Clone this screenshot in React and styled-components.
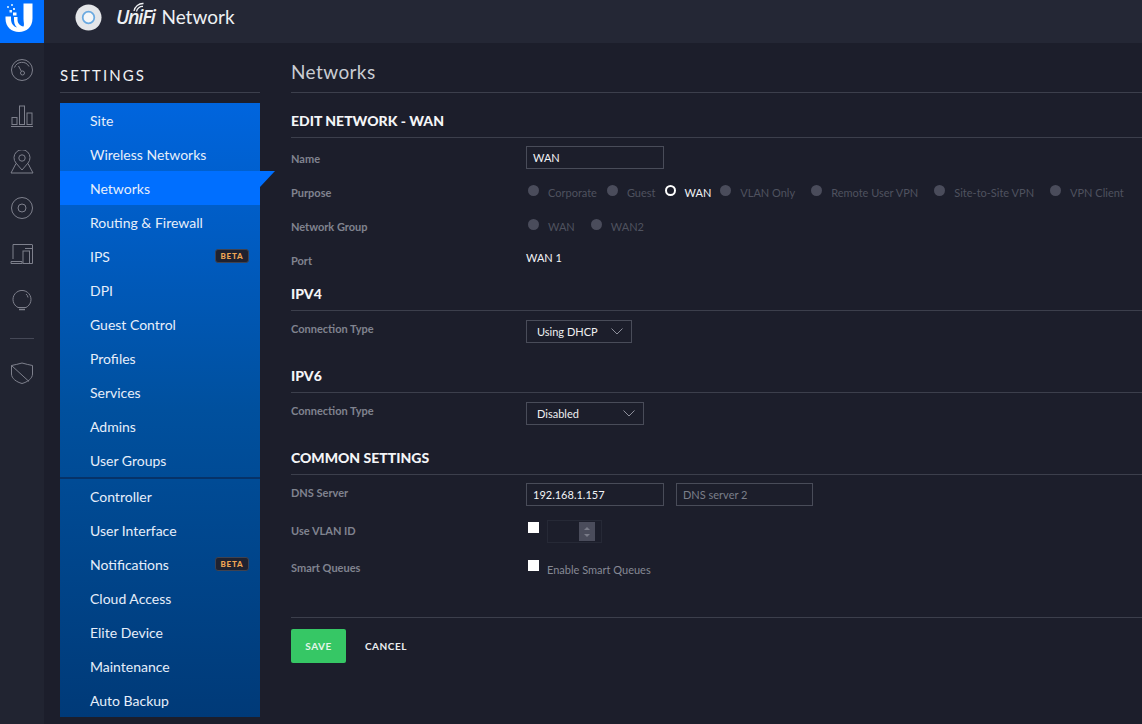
import React from 'react';
import styled, { createGlobalStyle } from 'styled-components';

const GlobalStyle = createGlobalStyle`
    html, body {
        margin: 0;
        padding: 0;
        background: #1c1e2b;
    }
    body {
        font-family: Lato, "Open Sans", sans-serif;
        color: #fff;
    }
`;

const Page = styled.div`
    width: 1142px;
    height: 724px;
    overflow: hidden;
    display: grid;
    grid-template-columns: 44px 1fr;
    grid-template-rows: 43px 1fr;
    background: #1c1e2b;
`;

const LogoTile = styled.div`
    background: #006fff;
    padding: 3px 0 0 5px;
`;

const Header = styled.header`
    background: #242735;
    display: flex;
    align-items: flex-start;
    padding: 4px 0 0 31px;
`;

const Brand = styled.div`
    position: relative;
    margin-left: 14px;
    font-size: 19px;
    line-height: 26px;
    color: #eef0f3;
    display: flex;
    gap: 7px;
`;

const BrandItalic = styled.span`
    font-family: "Open Sans", sans-serif;
    font-style: italic;
    font-weight: 600;
    font-size: 19.5px;
    letter-spacing: -1.4px;
`;

const BrandWaves = styled.svg`
    position: absolute;
    left: 17px;
    top: -2px;
`;

const Rail = styled.nav`
    background: #212431;
    display: flex;
    flex-direction: column;
    align-items: center;
    padding-top: 4px;
`;

const RailItem = styled.div`
    height: 46px;
    display: flex;
    align-items: center;
    justify-content: center;
`;

const RailRule = styled.div`
    width: 24px;
    height: 1px;
    background: #454856;
    margin: 15px 0 11px;
`;

const Body = styled.div`
    display: flex;
    min-height: 0;
    padding-left: 16px;
`;

const Sidebar = styled.aside`
    width: 200px;
    flex: none;
`;

const SidebarTitle = styled.div`
    height: 50px;
    box-sizing: border-box;
    padding-top: 23px;
    font-size: 15px;
    line-height: 18px;
    letter-spacing: 2.1px;
    border-bottom: 1px solid #3c3f4c;
    color: #f0f1f3;
`;

const Menu = styled.div`
    margin-top: 10px;
    height: 614px;
    background: linear-gradient(180deg, #0065de 0%, #00509e 50%, #003a78 100%);
`;

const MenuGroup = styled.div`
    & + & {
        margin-top: 2px;
        box-shadow: 0 -2px 0 #063268;
    }
`;

const MenuItem = styled.div`
    position: relative;
    height: 34px;
    display: flex;
    align-items: center;
    justify-content: space-between;
    padding: 0 11px 0 30px;
    font-size: 14px;
    color: #e6eefa;
    background: ${(props) => (props.$active ? '#006fff' : 'transparent')};

    ${(props) =>
        props.$active &&
        `&::after {
            content: '';
            position: absolute;
            left: 100%;
            top: 0;
            width: 15px;
            height: 16px;
            background: #006fff;
            clip-path: polygon(0 0, 100% 0, 0 100%);
        }`}
`;

const Beta = styled.span`
    width: 34px;
    height: 14px;
    box-sizing: border-box;
    border: 1px solid #3f4250;
    border-radius: 3px;
    background: #1f2230;
    color: #f0a654;
    font-size: 8px;
    font-weight: 900;
    letter-spacing: 0.8px;
    display: flex;
    align-items: center;
    justify-content: center;
`;

const Main = styled.main`
    flex: 1;
    padding-left: 31px;
`;

const PageTitle = styled.h1`
    margin: 0;
    height: 50px;
    box-sizing: border-box;
    padding-top: 16px;
    font-size: 19px;
    line-height: 26px;
    font-weight: 400;
    letter-spacing: 0.4px;
    color: #c9ccd2;
    border-bottom: 1px solid #3c3f4c;
`;

const SectionTitle = styled.h2`
    margin: ${(props) => props.$top}px 0 ${(props) => props.$bottom ?? 3}px;
    height: 26px;
    box-sizing: border-box;
    font-size: 14px;
    line-height: 18px;
    font-weight: 900;
    color: #f4f5f7;
    border-bottom: 1px solid #3c3f4c;
`;

const Row = styled.div`
    display: grid;
    grid-template-columns: 235px 1fr;
    align-items: center;
    height: ${(props) => props.$height || 34}px;
`;

const Label = styled.div`
    font-size: 11px;
    font-weight: 700;
    color: #80838f;
    position: relative;
    top: ${(props) => props.$shift || 0}px;
`;

const Controls = styled.div`
    display: flex;
    align-items: center;
`;

const Input = styled.div`
    width: ${(props) => props.width || 138}px;
    height: 23px;
    box-sizing: border-box;
    border: 1px solid #494c59;
    padding-left: 6px;
    margin-right: 12px;
    font-size: 11px;
    line-height: 21px;
    color: ${(props) => (props.$placeholder ? '#7b7e8a' : '#f2f3f5')};
`;

const Select = styled.div`
    width: ${(props) => props.width}px;
    height: 23px;
    box-sizing: border-box;
    border: 1px solid #494c59;
    padding: 0 8px 0 10px;
    display: flex;
    align-items: center;
    justify-content: space-between;
    font-size: 11px;
    color: #eff0f2;
`;

const RadioOption = styled.div`
    display: flex;
    align-items: center;
    margin-right: ${(props) => props.$gap}px;
    font-size: 11px;
    color: ${(props) => (props.$on ? '#f2f3f5' : '#4f525f')};
`;

const RadioDot = styled.span`
    width: 11px;
    height: 11px;
    box-sizing: border-box;
    border-radius: 50%;
    margin: -3px 9px 0 2px;
    background: ${(props) => (props.$on ? 'transparent' : '#4a4c5b')};
    border: ${(props) => (props.$on ? '2.5px solid #fff' : 'none')};
`;

const PortValue = styled.div`
    font-size: 11px;
    color: #f2f3f5;
    position: relative;
    top: -3px;
`;

const CheckBox = styled.span`
    width: 11px;
    height: 11px;
    background: #fff;
    margin: 0 8px 0 2px;
    position: relative;
    top: ${(props) => props.$shift || 0}px;
`;

const Spinner = styled.div`
    width: 55px;
    height: 23px;
    box-sizing: border-box;
    border: 1px solid #262936;
    display: flex;
    justify-content: flex-end;
    padding: 1px 6px 1px 0;
`;

const SpinnerButtons = styled.div`
    width: 16px;
    background: #4a4c5b;
    display: flex;
    flex-direction: column;
    align-items: center;
    justify-content: center;
    gap: 4px;
`;

const SpinUp = styled.span`
    width: 0;
    height: 0;
    border-left: 3px solid transparent;
    border-right: 3px solid transparent;
    border-${(props) => (props.$down ? 'top' : 'bottom')}: 3px solid #797b88;
`;

const CheckText = styled.span`
    font-size: 11px;
    color: #868995;
    position: relative;
    top: 1px;
`;

const Footer = styled.div`
    margin-top: 30px;
    border-top: 1px solid #3c3f4c;
    padding-top: 11px;
    display: flex;
    align-items: center;
`;

const SaveButton = styled.div`
    width: 55px;
    height: 34px;
    border-radius: 2px;
    background: #36c765;
    color: #e4f5ea;
    font-size: 10px;
    letter-spacing: 0.5px;
    font-weight: 700;
    display: flex;
    align-items: center;
    justify-content: center;
`;

const CancelButton = styled.div`
    margin-left: 19px;
    font-size: 10px;
    letter-spacing: 0.5px;
    font-weight: 700;
    color: #eceef1;
`;

const stroke = { fill: 'none', stroke: '#7e808c', strokeWidth: 1 };

const GaugeIcon = () => (
    <svg width="24" height="24" viewBox="0 0 24 24" {...stroke}>
        <circle cx="12" cy="12" r="10.5" />
        <path d="M4.500 9.500a8 8 0 0 1 14.500 -1" />
        <path d="M8.500 8l2.700 5" />
        <circle cx="12.500" cy="15" r="2" />
    </svg>
);

const BarsIcon = () => (
    <svg width="24" height="24" viewBox="0 0 24 24" {...stroke}>
        <path d="M1 22.500h22" />
        <rect x="2" y="13.500" width="5" height="7" />
        <rect x="9.500" y="2" width="5" height="18.500" />
        <rect x="17" y="9" width="5" height="11.500" />
    </svg>
);

const MapIcon = () => (
    <svg width="24" height="24" viewBox="0 0 24 24" {...stroke}>
        <path d="M12 20l-6-7a8 8 0 1 1 12 0z" />
        <circle cx="12" cy="8" r="3.200" />
        <path d="M6 13.500L1 23h22l-5-9.500" />
    </svg>
);

const DiscIcon = () => (
    <svg width="24" height="24" viewBox="0 0 24 24" {...stroke}>
        <circle cx="12" cy="12" r="10.500" />
        <circle cx="12" cy="12" r="4" />
    </svg>
);

const DevicesIcon = () => (
    <svg width="24" height="24" viewBox="0 0 24 24" {...stroke}>
        <path d="M3 17V2.500h19" />
        <path d="M1 19.500h11v2H1z" />
        <rect x="13" y="9" width="6.500" height="12.500" />
        <path d="M22.500 2.500v19h-3M15 6.500h7.500" />
    </svg>
);

const BulbIcon = () => (
    <svg width="24" height="24" viewBox="0 0 24 24" {...stroke}>
        <path d="M8 19.500a9 9 0 1 1 8 0z" />
        <path d="M9 21.500h6" strokeWidth="1.500" />
        <path d="M16 6a5.500 5.500 0 0 1 2 3.500" />
    </svg>
);

const ShieldIcon = () => (
    <svg width="24" height="24" viewBox="0 0 24 24" {...stroke}>
        <path d="M1.500 4.500C5 3.800 8.500 3 12 2c3.500 1 7 1.800 10.500 2.500V13c0 4.500-5 8-10.500 9.500C6.500 21 1.500 17.500 1.500 13z" />
        <path d="M1.500 4.500L19 20.500" />
    </svg>
);

const UnifiLogo = () => (
    <svg width="28" height="30" viewBox="0 0 28 30" style={{ display: 'block' }}>
        <path
            d="M18.500 0.500H27.500V15.500C27.500 24 21.500 29 14 29C6.500 29 0.500 24 0.500 15.500V13.500H6V16C6 20.500 8.500 23.500 12 24.500C9.500 22.500 9 19 9 16.500V14H12.500V16.500C12.500 20.500 15 23 18.500 23.500C19.500 22 18.500 19 18.500 16z"
            fill="#fff"
        />
        <rect x="2" y="3" width="2" height="2" fill="#a9d4ff" />
        <rect x="6" y="1" width="2" height="2" fill="#a9d4ff" />
        <rect x="4.500" y="7" width="2.500" height="2.500" fill="#e0f0ff" />
        <rect x="8" y="5" width="2" height="2" fill="#cfe6ff" />
        <rect x="8" y="9.500" width="3.500" height="3" fill="#fff" />
    </svg>
);

const DeviceIcon = () => (
    <svg width="27" height="27" viewBox="0 0 28 28">
        <circle cx="14" cy="14" r="13.500" fill="#e4e6e9" />
        <circle cx="14" cy="14" r="6" fill="#f4f6f8" stroke="#6aa9e0" strokeWidth="1.800" />
    </svg>
);

const Chevron = () => (
    <svg width="12" height="7" viewBox="0 0 12 7" fill="none" stroke="#8e909c">
        <path d="M0.500 0.500L6 6l5.500-5.500" />
    </svg>
);

const railIcons = [GaugeIcon, BarsIcon, MapIcon, DiscIcon, DevicesIcon, BulbIcon];

const settingsMenu = [
    { label: 'Site' },
    { label: 'Wireless Networks' },
    { label: 'Networks', active: true },
    { label: 'Routing & Firewall' },
    { label: 'IPS', beta: true },
    { label: 'DPI' },
    { label: 'Guest Control' },
    { label: 'Profiles' },
    { label: 'Services' },
    { label: 'Admins' },
    { label: 'User Groups' },
];

const systemMenu = [
    { label: 'Controller' },
    { label: 'User Interface' },
    { label: 'Notifications', beta: true },
    { label: 'Cloud Access' },
    { label: 'Elite Device' },
    { label: 'Maintenance' },
    { label: 'Auto Backup' },
];

const purposes = [
    { label: 'Corporate', gap: 8 },
    { label: 'Guest', gap: 7 },
    { label: 'WAN', gap: 7, on: true },
    { label: 'VLAN Only', gap: 14 },
    { label: 'Remote User VPN', gap: 14 },
    { label: 'Site-to-Site VPN', gap: 14 },
    { label: 'VPN Client', gap: 0 },
];

const groups = [
    { label: 'WAN', gap: 14 },
    { label: 'WAN2', gap: 0 },
];

const renderMenu = (items) =>
    items.map((item) => (
        <MenuItem key={item.label} $active={item.active}>
            {item.label}
            {item.beta && <Beta>BETA</Beta>}
        </MenuItem>
    ));

const renderRadios = (items) =>
    items.map((item) => (
        <RadioOption key={item.label} $gap={item.gap} $on={item.on}>
            <RadioDot $on={item.on} />
            {item.label}
        </RadioOption>
    ));

const App = () => (
    <Page>
        <GlobalStyle />
        <LogoTile>
            <UnifiLogo />
        </LogoTile>
        <Header>
            <DeviceIcon />
            <Brand>
                <BrandWaves width="11" height="10" viewBox="0 0 11 10" fill="none" stroke="#eef0f3" strokeWidth="1.300">
                    <path d="M1 9a9 9 0 0 1 9.500-7.500" />
                    <path d="M3.500 9.500a6 6 0 0 1 6.500-5" />
                </BrandWaves>
                <BrandItalic>UniFi</BrandItalic>
                <span>Network</span>
            </Brand>
        </Header>
        <Rail>
            {railIcons.map((Icon) => (
                <RailItem key={Icon.name}>
                    <Icon />
                </RailItem>
            ))}
            <RailRule />
            <RailItem>
                <ShieldIcon />
            </RailItem>
        </Rail>
        <Body>
            <Sidebar>
                <SidebarTitle>SETTINGS</SidebarTitle>
                <Menu>
                    <MenuGroup>{renderMenu(settingsMenu)}</MenuGroup>
                    <MenuGroup>{renderMenu(systemMenu)}</MenuGroup>
                </Menu>
            </Sidebar>
            <Main>
                <PageTitle>Networks</PageTitle>
                <SectionTitle $top={19} $bottom={2}>
                    EDIT NETWORK - WAN
                </SectionTitle>
                <Row $height={35}>
                    <Label $shift={1}>Name</Label>
                    <Controls>
                        <Input>WAN</Input>
                    </Controls>
                </Row>
                <Row>
                    <Label>Purpose</Label>
                    <Controls>{renderRadios(purposes)}</Controls>
                </Row>
                <Row>
                    <Label>Network Group</Label>
                    <Controls>{renderRadios(groups)}</Controls>
                </Row>
                <Row>
                    <Label>Port</Label>
                    <PortValue>WAN 1</PortValue>
                </Row>
                <SectionTitle $top={8}>IPV4</SectionTitle>
                <Row>
                    <Label $shift={-3}>Connection Type</Label>
                    <Controls>
                        <Select width={106}>
                            Using DHCP
                            <Chevron />
                        </Select>
                    </Controls>
                </Row>
                <SectionTitle $top={19}>IPV6</SectionTitle>
                <Row>
                    <Label $shift={-3}>Connection Type</Label>
                    <Controls>
                        <Select width={118}>
                            Disabled
                            <Chevron />
                        </Select>
                    </Controls>
                </Row>
                <SectionTitle $top={19} $bottom={1}>
                    COMMON SETTINGS
                </SectionTitle>
                <Row $height={37}>
                    <Label $shift={-2}>DNS Server</Label>
                    <Controls>
                        <Input>192.168.1.157</Input>
                        <Input width={137} $placeholder>
                            DNS server 2
                        </Input>
                    </Controls>
                </Row>
                <Row $height={37}>
                    <Label $shift={-1}>Use VLAN ID</Label>
                    <Controls>
                        <CheckBox $shift={-4} />
                        <Spinner>
                            <SpinnerButtons>
                                <SpinUp />
                                <SpinUp $down />
                            </SpinnerButtons>
                        </Spinner>
                    </Controls>
                </Row>
                <Row $height={37}>
                    <Label $shift={-1}>Smart Queues</Label>
                    <Controls>
                        <CheckBox $shift={-3} />
                        <CheckText>Enable Smart Queues</CheckText>
                    </Controls>
                </Row>
                <Footer>
                    <SaveButton>SAVE</SaveButton>
                    <CancelButton>CANCEL</CancelButton>
                </Footer>
            </Main>
        </Body>
    </Page>
);

export default App;
